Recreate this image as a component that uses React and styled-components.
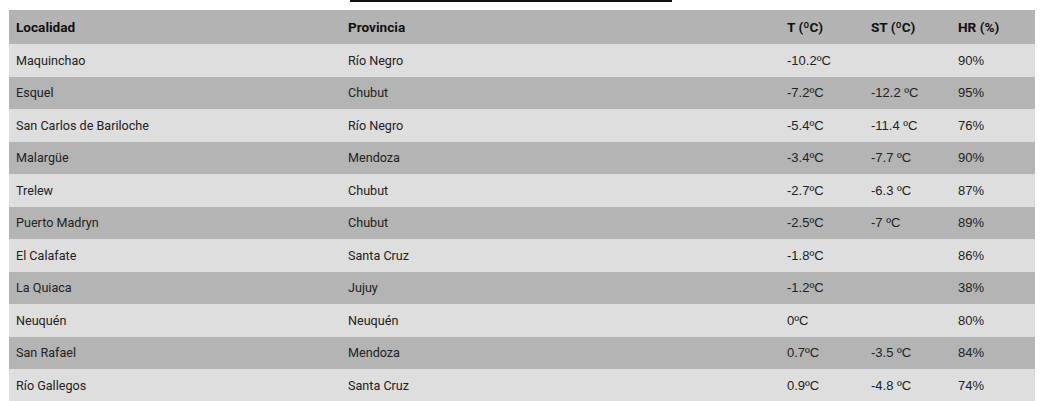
import styled, { createGlobalStyle } from 'styled-components';

const rows = [
  ['Maquinchao', 'Río Negro', '-10.2ºC', '', '90%'],
  ['Esquel', 'Chubut', '-7.2ºC', '-12.2 ºC', '95%'],
  ['San Carlos de Bariloche', 'Río Negro', '-5.4ºC', '-11.4 ºC', '76%'],
  ['Malargüe', 'Mendoza', '-3.4ºC', '-7.7 ºC', '90%'],
  ['Trelew', 'Chubut', '-2.7ºC', '-6.3 ºC', '87%'],
  ['Puerto Madryn', 'Chubut', '-2.5ºC', '-7 ºC', '89%'],
  ['El Calafate', 'Santa Cruz', '-1.8ºC', '', '86%'],
  ['La Quiaca', 'Jujuy', '-1.2ºC', '', '38%'],
  ['Neuquén', 'Neuquén', '0ºC', '', '80%'],
  ['San Rafael', 'Mendoza', '0.7ºC', '-3.5 ºC', '84%'],
  ['Río Gallegos', 'Santa Cruz', '0.9ºC', '-4.8 ºC', '74%'],
];

function App() {
  return (
    <Page>
      <GlobalStyle />
      <TopStrip>
        <TopBar />
      </TopStrip>
      <Table>
        <colgroup>
          <col style={{ width: 332 }} />
          <col style={{ width: 439 }} />
          <col style={{ width: 84 }} />
          <col style={{ width: 87 }} />
          <col style={{ width: 84 }} />
        </colgroup>
        <thead>
          <tr>
            <Th>Localidad</Th>
            <Th>Provincia</Th>
            <Th>T (ºC)</Th>
            <Th>ST (ºC)</Th>
            <Th>HR (%)</Th>
          </tr>
        </thead>
        <tbody>
          {rows.map((r, i) => (
            <Row key={r[0]} $dark={i % 2 === 1}>
              {r.map((c, j) => (
                <Td key={j} $num={j > 1}>{c}</Td>
              ))}
            </Row>
          ))}
        </tbody>
      </Table>
    </Page>
  );
}

export default App;

const GlobalStyle = createGlobalStyle`
  body {
    margin: 0;
    background: #fff;
    font-family: Roboto, 'Liberation Sans', sans-serif;
  }
`;

const Page = styled.div`
  width: 1048px;
  padding-left: 9px;
  box-sizing: border-box;
`;

const TopStrip = styled.div`
  height: 10px;
  padding-left: 341px;
  box-sizing: border-box;
`;

const TopBar = styled.div`
  width: 322px;
  height: 2px;
  background: #111;
`;

const Table = styled.table`
  width: 1026px;
  border-collapse: collapse;
  table-layout: fixed;
  color: #222;
`;

const Th = styled.th`
  height: 34px;
  padding: 0 7px;
  background: #b3b3b3;
  text-align: left;
  font-size: 13.6px;
  font-weight: 700;
  color: #111;
`;

const Row = styled.tr`
  background: ${(p) => (p.$dark ? '#b4b4b4' : '#dedede')};
`;

const Td = styled.td`
  height: 32.5px;
  padding: 0 7px;
  font-family: ${(p) => (p.$num ? "'Liberation Sans', Arial, sans-serif" : 'Roboto, sans-serif')};
  font-size: ${(p) => (p.$num ? '13px' : '12.6px')};
  white-space: nowrap;
`;
